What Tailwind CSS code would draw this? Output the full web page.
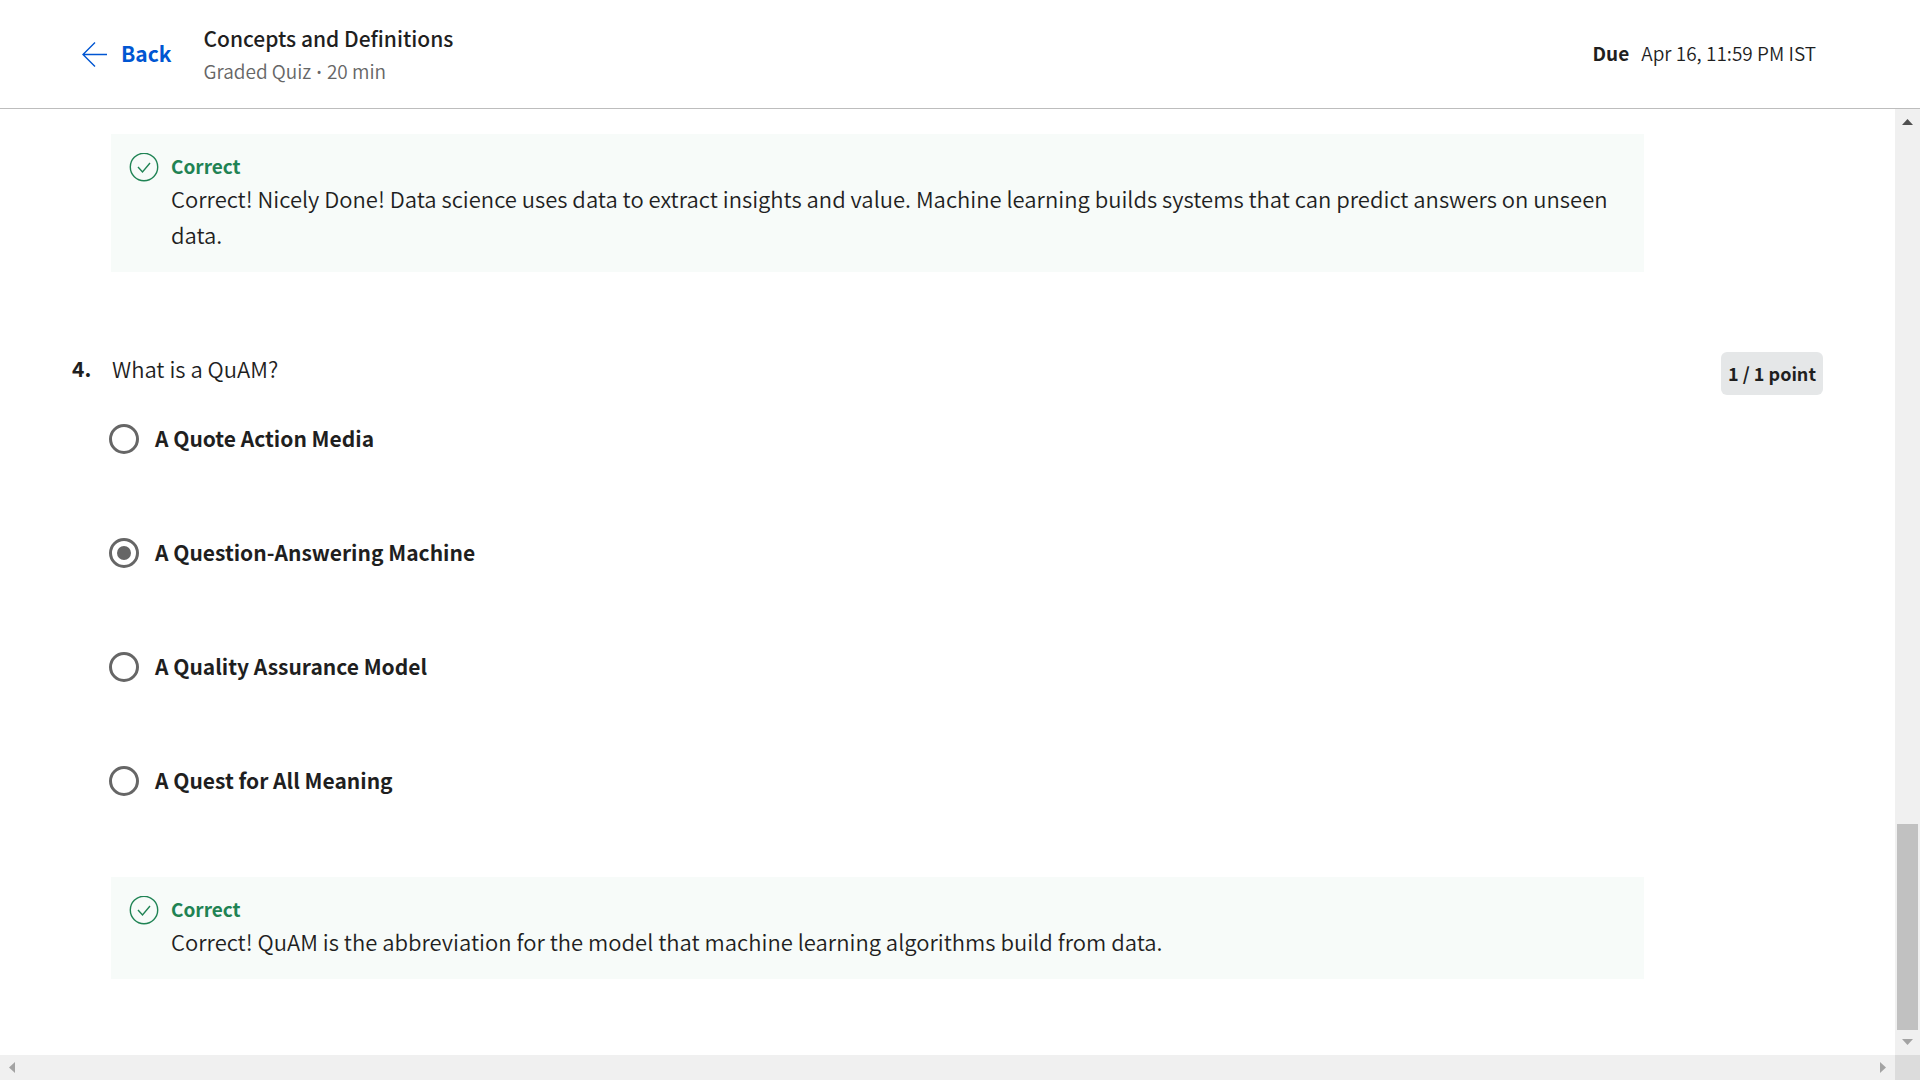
<!DOCTYPE html>
<html lang="en">
<head>
<meta charset="utf-8">
<title>Concepts and Definitions</title>
<script src="https://cdn.jsdelivr.net/npm/@tailwindcss/browser@4"></script>
</head>
<body class="flex h-screen flex-col overflow-hidden bg-white font-['Source_Sans_Pro','Noto_Sans_CJK_SC',sans-serif] text-[#1f1f1f]">
<header class="flex h-[109px] shrink-0 items-center border-b border-[#bdbdbd] pr-[104px] pl-[81px]">
  <a href="#" class="flex items-center gap-[13px] text-[21px] leading-8 font-bold text-[#0056d2]">
    <svg class="size-[27px]" viewBox="0 0 27 27" fill="none" stroke="currentColor" stroke-width="1.4" aria-hidden="true"><path d="M26 13.5H2M14 1.5 2 13.5l12 12"/></svg>
    <span class="pb-0.5">Back</span>
  </a>
  <div class="ml-8 grow pt-0.5">
    <h1 class="text-[21px] leading-8 font-medium">Concepts and Definitions</h1>
    <p class="text-[19px] leading-[34px] font-[350] text-[#666]">Graded Quiz <span class="font-['Open_Sans']">•</span> 20 min</p>
  </div>
  <p class="flex gap-3 pb-0.5 text-[19px] leading-8"><b>Due</b><span class="font-[350]">Apr 16, 11:59 PM IST</span></p>
</header>
<div class="flex min-h-0 grow">
  <div class="flex min-w-0 grow flex-col">
    <main class="min-h-0 grow overflow-hidden pt-[25px] pr-[72px] pl-[72px]">
      <section class="mr-[179px] ml-[39px] flex gap-3 bg-[#f7fbf9] pt-5 pr-8 pb-5 pl-[18px]">
        <svg class="-mt-px size-[30px] shrink-0" viewBox="0 0 30 30" fill="none" stroke="#1f8354" stroke-width="1.4" aria-hidden="true"><circle cx="15" cy="14" r="13.7"/><path d="m9 14 4.500 5 7.500-9"/></svg>
        <div>
          <h2 class="mb-0.5 text-[19px] leading-6 font-bold text-[#1f8354]">Correct</h2>
          <p class="text-[22px] leading-9 font-[350]">Correct! Nicely Done! Data science uses data to extract insights and value. Machine learning builds systems that can predict answers on unseen data.</p>
        </div>
      </section>
      <form>
        <fieldset>
          <legend class="contents"><span class="mt-[78px] flex items-start"><b class="w-10 text-[21px] leading-9">4.</b><span class="grow text-[22px] leading-9 font-[350]">What is a QuAM?</span><strong class="mt-0.5 rounded-md bg-[#e5e7e8] px-[7px] text-[18px] leading-[43px] font-bold">1 / 1 point</strong></span></legend>
          <div class="mt-[26px] ml-[37px] flex flex-col gap-[78px] text-[21px] leading-[34px] font-bold">
            <label class="flex items-center gap-4"><input type="radio" name="answer" class="size-[30px] appearance-none rounded-full border-3 border-[#666] p-[5px] checked:bg-[#666] checked:bg-clip-content"><span class="pb-0.5">A Quote Action Media</span></label>
            <label class="flex items-center gap-4"><input type="radio" name="answer" checked class="size-[30px] appearance-none rounded-full border-3 border-[#666] p-[5px] checked:bg-[#666] checked:bg-clip-content"><span class="pb-0.5">A Question-Answering Machine</span></label>
            <label class="flex items-center gap-4"><input type="radio" name="answer" class="size-[30px] appearance-none rounded-full border-3 border-[#666] p-[5px] checked:bg-[#666] checked:bg-clip-content"><span class="pb-0.5">A Quality Assurance Model</span></label>
            <label class="flex items-center gap-4"><input type="radio" name="answer" class="size-[30px] appearance-none rounded-full border-3 border-[#666] p-[5px] checked:bg-[#666] checked:bg-clip-content"><span class="pb-0.5">A Quest for All Meaning</span></label>
          </div>
        </fieldset>
      </form>
      <section class="mt-[78px] mr-[179px] ml-[39px] flex gap-3 bg-[#f7fbf9] pt-5 pr-8 pb-5 pl-[18px]">
        <svg class="-mt-px size-[30px] shrink-0" viewBox="0 0 30 30" fill="none" stroke="#1f8354" stroke-width="1.4" aria-hidden="true"><circle cx="15" cy="14" r="13.7"/><path d="m9 14 4.500 5 7.500-9"/></svg>
        <div>
          <h2 class="mb-0.5 text-[19px] leading-6 font-bold text-[#1f8354]">Correct</h2>
          <p class="text-[22px] leading-9 font-[350]">Correct! QuAM is the abbreviation for the model that machine learning algorithms build from data.</p>
        </div>
      </section>
    </main>
    <div class="flex h-[25px] shrink-0 items-center justify-between bg-[#f0f0f0] px-[9px]" aria-hidden="true">
      <svg class="h-[11px] w-[6px]" viewBox="0 0 6 11" fill="#a3a3a3"><path d="M6 0v11L0 5.500z"/></svg>
      <svg class="h-[11px] w-[6px]" viewBox="0 0 6 11" fill="#a3a3a3"><path d="M0 0v11l6-5.500z"/></svg>
    </div>
  </div>
  <div class="flex w-[25px] shrink-0 flex-col bg-[#f0f0f0]" aria-hidden="true">
    <svg class="mx-auto mt-[10px] h-[6px] w-[11px]" viewBox="0 0 11 6" fill="#505050"><path d="M0 6h11L5.500 0z"/></svg>
    <div class="mx-0.5 mt-auto h-[206px] bg-[#c1c1c1]"></div>
    <svg class="mx-auto mt-[9px] mb-[10px] h-[6px] w-[11px]" viewBox="0 0 11 6" fill="#a3a3a3"><path d="M0 0h11L5.500 6z"/></svg>
    <div class="h-[25px] bg-[#dcdcdc]"></div>
  </div>
</div>
</body>
</html>
